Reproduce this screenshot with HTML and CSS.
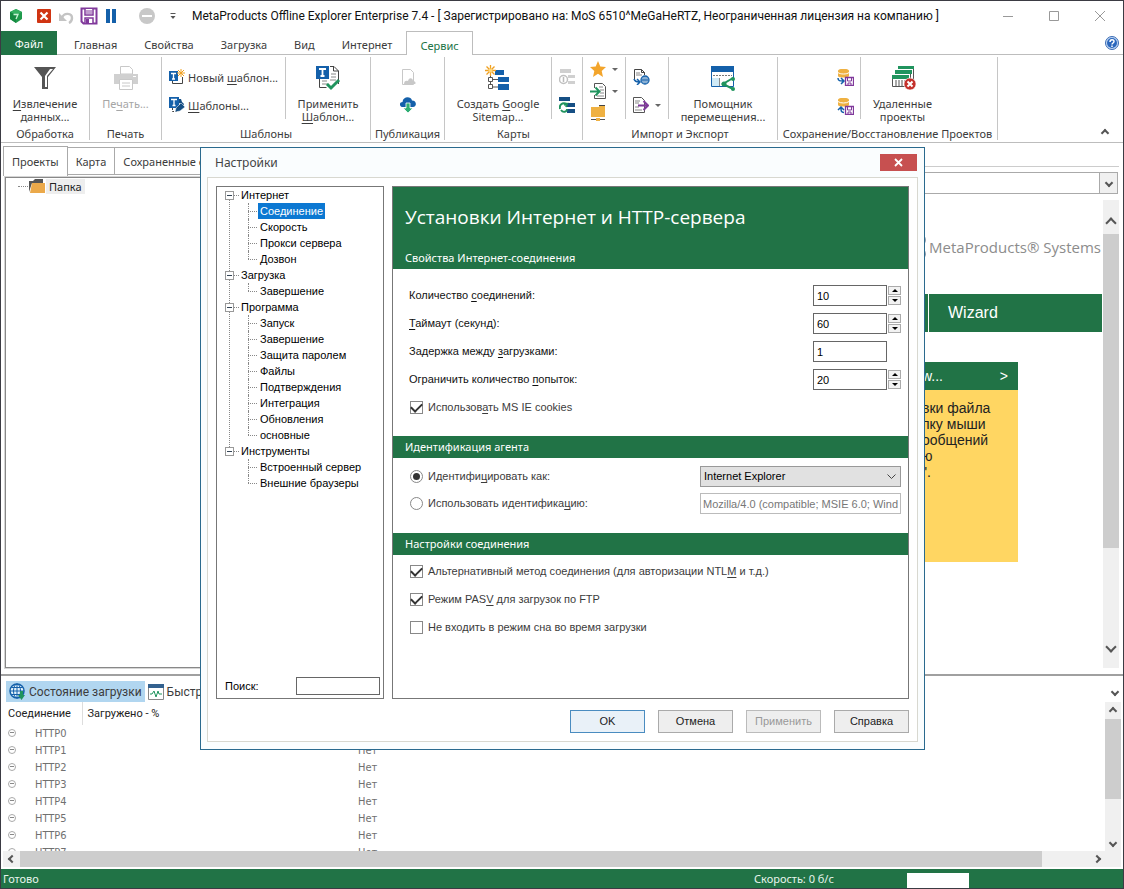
FILE: index.html
```html
<!DOCTYPE html>
<html lang="ru">
 <head>
  <meta charset="utf-8">
  <title>MetaProducts Offline Explorer Enterprise</title>
  <link rel="stylesheet" href="styles.css">
 </head>
 <body>
  <header class="titlebar">
   <svg class="ic" width="16" height="16" viewBox="0 0 16 16"><path d="M8 1l6 3v7l-6 4-6-4V4z" fill="#1f9a4c"/><path d="M8 1l6 3-6 3-6-3z" fill="#36b062"/><path d="M2 4l6 3v8l-6-4z" fill="#168a42"/><path d="M5.500 6.500h4.500l-2 4.500" fill="none" stroke="#c8f0d4" stroke-width="1.300"/></svg>
   <div class="quick">
    <button aria-label="Стоп"><svg width="16" height="16" viewBox="0 0 16 16"><rect x="1" y="1" width="14" height="14" rx="1" fill="#d03412"/><path d="M4.500 4.500l7 7m0-7l-7 7" stroke="#fff" stroke-width="2.200"/></svg></button>
    <button aria-label="Отменить"><svg width="16" height="16" viewBox="0 0 16 16"><path d="M1 5v8h8z" fill="#c4c4c4"/><path d="M4 10c2-6 10-5 10 0 0 2-1 4-3 5" fill="none" stroke="#c4c4c4" stroke-width="2.400"/></svg></button>
    <button aria-label="Сохранить"><svg width="18" height="18" viewBox="0 0 18 18"><path d="M1.500 1.500h15v15h-13l-2-2z" fill="#fff" stroke="#80399b" stroke-width="2"/><path d="M5 2v6h8V2M5 16v-5h8v5" fill="#fff" stroke="#80399b" stroke-width="1.500"/><path d="M6 4h6M6 6h6" stroke="#80399b"/><path d="M6 12h3v4H6z" fill="#80399b"/></svg></button>
    <button aria-label="Пауза"><svg width="14" height="16" viewBox="0 0 14 16"><path d="M2 1h4v14H2zM8 1h4v14H8z" fill="#1460aa"/></svg></button>
    <button class="minus" aria-label="Убрать"><svg width="18" height="18" viewBox="0 0 18 18"><circle cx="9" cy="9" r="8" fill="#c8c8c8"/><path d="M4 9h10" stroke="#fff" stroke-width="2"/></svg></button>
    <button class="more" aria-label="Настройка панели"><svg width="8" height="8" viewBox="0 0 8 8"><path d="M1.500 1.500h5" stroke="#555"/><path d="M1.500 4h5L4 7z" fill="#555"/></svg></button>
   </div>
   <h1 class="title">MetaProducts Offline Explorer Enterprise 7.4 - [ Зарегистрировано на: MoS 6510^MeGaHeRTZ, Неограниченная лицензия на компанию ]</h1>
   <div class="winbtns">
    <button aria-label="Свернуть"><svg width="12" height="12" viewBox="0 0 12 12"><path d="M1 6.500h10" stroke="#999"/></svg></button>
    <button aria-label="Развернуть"><svg width="12" height="12" viewBox="0 0 12 12"><path d="M1.500 1.500h9v9h-9z" fill="none" stroke="#999"/></svg></button>
    <button aria-label="Закрыть"><svg width="12" height="12" viewBox="0 0 12 12"><path d="M1 1l10 10M11 1L1 11" stroke="#999"/></svg></button>
   </div>
  </header>

  <nav class="menu">
   <button class="file">Файл</button>
   <button>Главная</button>
   <button>Свойства</button>
   <button>Загрузка</button>
   <button>Вид</button>
   <button>Интернет</button>
   <button class="current">Сервис</button>
   <button class="help" aria-label="Справка"><svg width="14" height="14" viewBox="0 0 14 14"><circle cx="7" cy="7" r="6.500" fill="#c3d8f3" stroke="#3b6cb4"/><circle cx="7" cy="7" r="5" fill="#2b67bd"/><path d="M5 6c0-3 4-3 4-.500C9 7 7 7 7 8.500M7 9.500v1.500" fill="none" stroke="#fff" stroke-width="1.500"/></svg></button>
  </nav>

  <section class="ribbon">
   <div class="group g-data">
    <div class="tools">
     <button class="big"><svg width="26" height="26" viewBox="0 0 26 26"><path d="M2 2h22l-8 10v12h-6V12z" fill="#555"/><path d="M18 4h3l-6 7v11h-2V11z" fill="#fff"/></svg><span><u>И</u>звлечение<br>данных...</span></button>
    </div>
    <h2>Обработка</h2>
   </div>
   <div class="group g-print">
    <div class="tools">
     <button class="big" disabled><svg width="26" height="26" viewBox="0 0 26 26"><path d="M7.500 1.500h9l3 3V9h-12z" fill="#fff" stroke="#c8c8c8"/><path d="M1 9h24v10H1z" fill="#d0d0d0"/><path d="M6.500 14.500h13v10h-13z" fill="#fff" stroke="#c8c8c8"/><path d="M9 18h8M9 21h8" stroke="#c8c8c8"/><path d="M20 11.500h3" stroke="#fff"/></svg><span>Пе<u>ч</u>ать...</span></button>
    </div>
    <h2>Печать</h2>
   </div>
   <div class="group g-tpl">
    <div class="tools">
     <div class="col wide">
      <button class="row"><svg width="16" height="16" viewBox="0 0 16 16"><path d="M3.500 10v4.500h10V8" fill="#fff" stroke="#444"/><path d="M0 2h9v10H0z" fill="#1460aa"/><path d="M2 4.500h5M4.500 4v6M3 10h3" stroke="#fff" stroke-width="1.300"/><path d="M12 0v8M8 4h8M9 1l6 6M15 1L9 7" stroke="#f0a020"/></svg><span>Новый <u>ш</u>аблон...</span></button>
      <button class="row"><svg width="16" height="16" viewBox="0 0 16 16"><path d="M3.500 11v3.500h5" fill="none" stroke="#444" stroke-dasharray="2 1"/><path d="M0 0h10v11H0z" fill="#1460aa"/><path d="M2 2.500h6M5 2.500v6M3.500 8.500h3" stroke="#fff" stroke-width="1.300"/><path d="M10 2h2l1 3 2 2-1 2-2-2-2-1z" fill="#164f84"/><path d="M6 15l1-4 5-5 4 4-5 4z" fill="#164f84" stroke="#fff" stroke-width=".5"/></svg><span><u>Ш</u>аблоны...</span></button>
     </div>
     <button class="big"><svg width="26" height="26" viewBox="0 0 26 26"><path d="M4.500 13v9.500h7M15 1.500h4l4.500 4.500v13M18.500 1.500V6h5" fill="none" stroke="#444"/><path d="M16 9h5M16 12h5M15 15h6M7 16h5M7 19h6" stroke="#888"/><path d="M1 1h13v13H1z" fill="#1460aa"/><path d="M4 4h7M7.500 4v7M5.500 11h4" stroke="#fff" stroke-width="1.800"/><path d="M12 19l4 4 8-8" fill="none" stroke="#20945e" stroke-width="3"/></svg><span>Применить<br><u>Ш</u>аблон...</span></button>
    </div>
    <h2>Шаблоны</h2>
   </div>
   <div class="group g-pub">
    <div class="tools">
     <div class="col">
      <button class="sm" disabled aria-label="Опубликовать"><svg width="16" height="16" viewBox="0 0 16 16"><path d="M2.500.500h8l3 3v12h-11z" fill="#fff" stroke="#c8c8c8"/><path d="M4 15c0-3 2-4 4-3 1-4 5-3 5 0 3 0 3 3 2 3z" fill="#c8c8c8"/></svg></button>
      <button class="sm" aria-label="Загрузить"><svg width="16" height="16" viewBox="0 0 16 16"><path d="M3 10c-4 0-4-5-.500-5C3-1 11-1 12 3.500c5 0 5 6.500 1 6.500z" fill="#1460aa"/><path d="M6 6h4v5h3l-5 5-5-5h3z" fill="#2fae74" stroke="#fff" stroke-width=".8"/></svg></button>
     </div>
    </div>
    <h2>Публикация</h2>
   </div>
   <div class="group g-map">
    <div class="tools">
     <button class="big"><svg width="26" height="26" viewBox="0 0 26 26"><path d="M5.500 10v13M5.500 14.500H14M5.500 22H14" stroke="#555" fill="none"/><path d="M3.500 12.500h4v4h-4zM3.500 19.500h4v4h-4z" fill="#fff" stroke="#555"/><path d="M10 5h9v5h-9zM13 12h11v5H13zM13 19h11v6H13z" fill="#1460aa"/><path d="M5.500 0v11M0 5.500h11M1.500 1.500l8 8M9.500 1.500l-8 8" stroke="#f0a020" stroke-width="1.300"/><circle cx="5.500" cy="5.500" r="2" fill="#ffd77a"/></svg><span>Создать <u>G</u>oogle<br>Sitemap...</span></button>
     <div class="col line">
      <button class="sm" disabled aria-label="Сведения"><svg width="16" height="16" viewBox="0 0 16 16"><path d="M1 0h11v4H1zM9 6h7v3H9zM9 12h7v3H9z" fill="#d0d0d0"/><circle cx="4.500" cy="10.500" r="4" fill="#fff" stroke="#c0c0c0" stroke-width="1.500"/><path d="M4.500 8v5" stroke="#bbb" stroke-width="1.500"/></svg></button>
      <button class="sm" aria-label="Обновить карту"><svg width="16" height="16" viewBox="0 0 16 16"><path d="M0 0h11v4H0zM8 6h8v4H8zM8 12h8v4H8z" fill="#164f84"/><path d="M8 7C3 5 0 8 1 12" fill="none" stroke="#20945e" stroke-width="2"/><path d="M2 13c2 3 6 2 6-1M5 8l3-1-1 3" fill="none" stroke="#20945e" stroke-width="1.800"/></svg></button>
     </div>
    </div>
    <h2>Карты</h2>
   </div>
   <div class="group g-imp">
    <div class="tools">
     <div class="col tight">
      <button class="sm drop" aria-label="Избранное"><svg width="16" height="16" viewBox="0 0 16 16"><path d="M8 0l2.300 5.500 5.700.500-4.300 4 1.300 6-5-3.200L3 16l1.300-6L0 6l5.700-.500z" fill="#f3a52c"/></svg></button>
      <button class="sm drop" aria-label="Импорт"><svg width="16" height="16" viewBox="0 0 16 16"><path d="M4.500 5V.500h8l3 3v12h-11V12" fill="#fff" stroke="#555"/><path d="M9 4h4M10 7h4M10 10h4M7 13h7" stroke="#888"/><path d="M0 8.500h9M5.500 4.500l4 4-4 4" fill="none" stroke="#20945e" stroke-width="2"/></svg></button>
      <button class="sm" aria-label="Сетевая папка"><svg width="16" height="16" viewBox="0 0 16 16"><path d="M1 2h8V1h6v11H1z" fill="#efb142"/><path d="M9 0h6v1H9z" fill="#444"/><path d="M1 14.500h5m4 0h5" stroke="#555"/><path d="M6 13h4v3H6z" fill="#efb142"/></svg></button>
     </div>
     <div class="col line imp2">
      <button class="sm" aria-label="Импорт из сети"><svg width="17" height="16" viewBox="0 0 17 16"><path d="M1.500 10V.500h7l3 3V6M8.500.500v3h3" fill="#fff" stroke="#444"/><path d="M3 4h4M3 6h6" stroke="#888"/><path d="M1 10c1 3 3 3 5 3M4 10l3 3-3 3" fill="none" stroke="#1460aa" stroke-width="1.500"/><circle cx="12" cy="11" r="4" fill="#fff" stroke="#1460aa" stroke-width="1.300"/><path d="M8 11h8M12 7v8M10 8v6M14 8v6" stroke="#1460aa"/></svg></button>
      <button class="sm drop" aria-label="Экспорт"><svg width="16" height="16" viewBox="0 0 16 16"><path d="M.500.500h8l3 3v12H.500z" fill="#fff" stroke="#555"/><path d="M2 4h5M2 6h4M2 10h4M2 13h7" stroke="#888"/><path d="M5 8.500h9M10.500 4l4.500 4.500-4.500 4.500" fill="none" stroke="#80399b" stroke-width="2"/></svg></button>
     </div>
     <button class="big line"><svg width="26" height="26" viewBox="0 0 26 26"><path d="M1.500 1.500h22v20h-22z" fill="#fff" stroke="#1460aa"/><path d="M1 1h23v6H1z" fill="#1460aa"/><path d="M3 10.500h19" stroke="#777" stroke-dasharray="2 1"/><path d="M2 13h7v8H2z" fill="#cfeaf6"/><path d="M9.500 13v8" stroke="#888"/><path d="M23 13l-10 6 10 5" fill="none" stroke="#20945e" stroke-width="2"/><circle cx="23" cy="14" r="2" fill="#20945e"/><circle cx="14" cy="19" r="2.500" fill="#20945e"/><circle cx="23" cy="24" r="2" fill="#20945e"/></svg><span>Помощник<br>перемещения...</span></button>
    </div>
    <h2>Импорт и Экспорт</h2>
   </div>
   <div class="group g-save">
    <div class="tools">
     <div class="col save">
      <button class="sm" aria-label="Сохранить проекты"><svg width="17" height="17" viewBox="0 0 17 17"><path d="M1 2c0-3 11-3 11 0v5c0 2-11 2-11 0z" fill="#efb142"/><path d="M1 3.500c2 2 9 2 11 0" fill="none" stroke="#fff"/><path d="M1 9c0 3 2 3 5 3M4 9l3 3-3 3" fill="none" stroke="#1460aa" stroke-width="1.500"/><path d="M8.500 8.500h8v8h-8z" fill="#fff" stroke="#80399b" stroke-width="1.300"/><path d="M10.500 9v3h4V9M11 16v-2h3v2" fill="none" stroke="#80399b"/></svg></button>
      <button class="sm" aria-label="Восстановить проекты"><svg width="17" height="17" viewBox="0 0 17 17"><path d="M1 2c0-3 11-3 11 0v5c0 2-11 2-11 0z" fill="#efb142"/><path d="M1 3.500c2 2 9 2 11 0" fill="none" stroke="#fff"/><path d="M7 14.500c-3 0-3-2-3-5M1 12l3-3 3 3" fill="none" stroke="#1460aa" stroke-width="1.500"/><path d="M8.500 8.500h8v8h-8z" fill="#fff" stroke="#80399b" stroke-width="1.300"/><path d="M10.500 9v3h4V9M11 16v-2h3v2" fill="none" stroke="#80399b"/></svg></button>
     </div>
     <button class="big line deleted"><svg width="26" height="26" viewBox="0 0 26 26"><path d="M8 1h16v3H8zM5 5h17v4H5zM2 10h17v4H2z" fill="#20945e"/><path d="M23.500 4v12M20.500 9v5M2.500 14v7.500h15V14" fill="none" stroke="#555"/><path d="M5 16h10M5 18h10M5 20h10" stroke="#555" stroke-dasharray="2 1"/><circle cx="20" cy="19" r="6" fill="#c4302b" stroke="#fff" stroke-width=".600"/><path d="M17.500 16.500l5 5m0-5l-5 5" stroke="#fff" stroke-width="2"/></svg><span>Удаленные<br>проекты</span></button>
    </div>
    <h2>Сохранение/Восстановление Проектов</h2>
   </div>
   <button class="collapse" aria-label="Свернуть ленту"><i class="chev up"></i></button>
  </section>

  <main class="work">
   <section class="projects">
    <div class="ptabs">
     <button class="current">Проекты</button>
     <button>Карта</button>
     <button class="saved">Сохраненные с</button>
    </div>
    <div class="ptree">
     <div class="node"><svg width="17" height="15" viewBox="0 0 17 15"><path d="M1 13V2h4l2-2h8v4H4z" fill="#555"/><path d="M4 4h13v10H2z" fill="#eba94a"/></svg><span>Папка</span></div>
    </div>
   </section>
   <section class="browser">
    <div class="address"><input aria-label="Адрес"><button aria-label="Список адресов"><i class="chev down"></i></button></div>
    <div class="view">
     <div class="page">
      <div class="brand"><svg width="28" height="28" viewBox="0 0 28 28"><circle cx="21" cy="7" r="6" fill="#8f9bab"/><circle cx="7" cy="7" r="6" fill="#8f9bab"/><circle cx="7" cy="21" r="6" fill="#8f9bab"/><circle cx="21" cy="21" r="6" fill="#8f9bab"/></svg><span>MetaProducts® Systems</span></div>
      <div class="pagenav"><a class="prev" href="#home">&nbsp;</a><a class="wizard" href="#wizard">Wizard</a></div>
      <article class="card">
       <h3><span>w...</span><span>&gt;</span></h3>
       <p>вки файла<br>пку мыши<br>ообщений<br>ю<br>".</p>
      </article>
     </div>
     <div class="vscroll tall"><button aria-label="Вверх"><i class="chev up"></i></button><div class="thumb"></div><button aria-label="Вниз"><i class="chev down"></i></button></div>
    </div>
   </section>
  </main>

  <section class="queue">
   <div class="qtabs">
    <button class="current"><svg width="17" height="17" viewBox="0 0 17 17"><circle cx="8" cy="8" r="7" fill="#e3f2fb" stroke="#1460aa" stroke-width="1.500"/><path d="M1 8h14M2.500 4.500h11M2.500 11.500h11M8 1v14" stroke="#1460aa"/><ellipse cx="8" cy="8" rx="3.500" ry="7" fill="none" stroke="#1460aa"/><path d="M9 12h2V8h3v4h2l-3.500 5z" fill="#20945e"/></svg>Состояние загрузки</button>
    <button><svg width="16" height="16" viewBox="0 0 16 16"><path d="M.500.500h15v15H.500z" fill="#fff" stroke="#888"/><path d="M0 0h16v4H0z" fill="#33618f"/><path d="M2 10h2l2-3 2 6 2-6 1 3h3" fill="none" stroke="#20945e"/></svg>Быстр</button>
    <button class="qmore" aria-label="Ещё"><i class="chev down"></i></button>
   </div>
   <div class="qbody">
    <div class="qlist">
     <table>
      <colgroup><col class="c-conn"><col class="c-load"><col class="c-state"></colgroup>
      <thead><tr><th>Соединение</th><th>Загружено - %</th><th></th></tr></thead>
      <tbody>
       <tr><td><i></i>HTTP0</td><td></td><td>Нет</td></tr>
       <tr><td><i></i>HTTP1</td><td></td><td>Нет</td></tr>
       <tr><td><i></i>HTTP2</td><td></td><td>Нет</td></tr>
       <tr><td><i></i>HTTP3</td><td></td><td>Нет</td></tr>
       <tr><td><i></i>HTTP4</td><td></td><td>Нет</td></tr>
       <tr><td><i></i>HTTP5</td><td></td><td>Нет</td></tr>
       <tr><td><i></i>HTTP6</td><td></td><td>Нет</td></tr>
       <tr><td><i></i>HTTP7</td><td></td><td>Нет</td></tr>
      </tbody>
     </table>
    </div>
    <div class="vscroll short"><button aria-label="Вверх"><i class="chev up"></i></button><div class="thumb"></div><button aria-label="Вниз"><i class="chev down"></i></button></div>
   </div>
   <div class="hscroll"><button aria-label="Влево"><i class="chev left"></i></button><div class="thumb"></div><button aria-label="Вправо"><i class="chev right"></i></button></div>
  </section>

  <footer class="status"><span>Готово</span><span class="speed">Скорость: 0 б/с</span><span class="meter"></span></footer>

  <form class="dialog" role="dialog" aria-labelledby="dlg-title">
   <div class="dlg-head"><h2 id="dlg-title">Настройки</h2><button type="button" aria-label="Закрыть"><svg width="9" height="9" viewBox="0 0 9 9"><path d="M1 1l7 7m0-7L1 8" stroke="#fff" stroke-width="1.800"/></svg></button></div>
   <div class="dlg-body">
    <div class="panes">
     <div class="tree">
      <ul>
       <li><button type="button" aria-label="Свернуть"></button>Интернет
        <ul><li><span class="picked">Соединение</span></li><li>Скорость</li><li>Прокси сервера</li><li>Дозвон</li></ul></li>
       <li><button type="button" aria-label="Свернуть"></button>Загрузка
        <ul><li>Завершение</li></ul></li>
       <li><button type="button" aria-label="Свернуть"></button>Программа
        <ul><li>Запуск</li><li>Завершение</li><li>Защита паролем</li><li>Файлы</li><li>Подтверждения</li><li>Интеграция</li><li>Обновления</li><li>основные</li></ul></li>
       <li><button type="button" aria-label="Свернуть"></button>Инструменты
        <ul><li>Встроенный сервер</li><li>Внешние браузеры</li></ul></li>
      </ul>
      <div class="search"><label for="find">Поиск:</label><input id="find"></div>
     </div>
     <div class="settings">
      <div class="banner"><h3>Установки Интернет и HTTP-сервера</h3><h4>Свойства Интернет-соединения</h4></div>
      <div class="fields">
       <div class="field"><label for="conn">Количество <u>с</u>оединений:</label><input id="conn" value="10"><span class="spin"><button type="button" aria-label="Больше"></button><button type="button" aria-label="Меньше"></button></span></div>
       <div class="field"><label for="tmo"><u>Т</u>аймаут (секунд):</label><input id="tmo" value="60"><span class="spin"><button type="button" aria-label="Больше"></button><button type="button" aria-label="Меньше"></button></span></div>
       <div class="field"><label for="delay">Задержка между <u>з</u>агрузками:</label><input id="delay" value="1"><span class="nospin"></span></div>
       <div class="field"><label for="tries">Ограничить количество <u>п</u>опыток:</label><input id="tries" value="20"><span class="spin"><button type="button" aria-label="Больше"></button><button type="button" aria-label="Меньше"></button></span></div>
       <label class="tick"><input type="checkbox" checked><span>Использов<u>а</u>ть MS IE cookies</span></label>
      </div>
      <h4 class="bar">Идентификация агента</h4>
      <div class="agent">
       <label class="tick"><input type="radio" name="agent" checked><span>Идентифи<u>ц</u>ировать как:</span></label>
       <select aria-label="Идентифицировать как"><option>Internet Explorer</option></select>
       <label class="tick"><input type="radio" name="agent"><span>Использовать идентифика<u>ц</u>ию:</span></label>
       <input class="ua" aria-label="Идентификация" disabled value="Mozilla/4.0 (compatible; MSIE 6.0; Windows NT 5.1)">
      </div>
      <h4 class="bar">Настройки соединения</h4>
      <div class="opts">
       <label class="tick"><input type="checkbox" checked><span>Альтернативный метод соединения (для авторизации NTL<u>M</u> и т.д.)</span></label>
       <label class="tick"><input type="checkbox" checked><span>Режим PAS<u>V</u> для загрузок по FTP</span></label>
       <label class="tick"><input type="checkbox"><span>Не входить в режим сна во время загрузки</span></label>
      </div>
     </div>
    </div>
    <div class="dlg-buttons">
     <button type="button" class="default">OK</button>
     <button type="button">Отмена</button>
     <button type="button" disabled>Применить</button>
     <button type="button">Справка</button>
    </div>
   </div>
  </form>
 </body>
</html>
```
FILE: styles.css
```css
* { box-sizing: border-box; }
body
{
 margin: 0;
 height: 100vh;
 display: flex;
 flex-direction: column;
 position: relative;
 overflow: hidden;
 border: 1px solid #3b3b43;
 background: #fff;
 color: #3c3c3c;
 font: 11px/13px "Noto Sans", "Open Sans", sans-serif;
}
h1, h2, h3, h4, p, ul { margin: 0; padding: 0; font-weight: normal; }
ul { list-style: none; }
button
{
 display: flex;
 align-items: center;
 justify-content: center;
 margin: 0;
 padding: 0;
 border: 0;
 background: none;
 color: inherit;
 font: inherit;
}
svg { display: block; flex: none; }
input, select { font: inherit; margin: 0; border-radius: 0; }
u { text-underline-offset: 2px; }

/* title bar */
.titlebar { display: flex; align-items: center; height: 30px; padding: 0 17px 0 7px; flex: none; }
.quick { display: flex; align-items: center; gap: 6px; margin-left: 12px; }
.quick .minus { margin-left: 14px; }
.quick .more { margin-left: 7px; }
.title { margin-left: 15px; color: #111; font: 12px/16px Roboto, sans-serif; white-space: nowrap; }
.winbtns { display: flex; gap: 34px; margin-left: auto; }

/* menu */
.menu
{
 display: flex;
 flex: none;
 gap: 1px;
 height: 24px;
 border-bottom: 1px solid #bdbdbd;
 padding-right: 4px;
}
.menu button { padding: 3px 13px 0; height: 24px; }
.menu .file { background: #217346; color: #fff; width: 56px; padding: 0; margin-right: 3px; }
.menu .current { border: 1px solid #bdbdbd; border-bottom: 0; background: #fff; color: #217346; }
.menu .help { margin-left: auto; padding: 0; }

/* ribbon */
.ribbon { display: flex; flex: none; height: 88px; border-bottom: 1px solid #bdbdbd; padding-top: 2px; }
.group { display: flex; flex-direction: column; height: 83px; border-right: 1px solid #c6c6c6; }
.group h2 { font-size: 11px; line-height: 12px; text-align: center; white-space: nowrap; }
.tools { display: flex; flex: 1; }
.g-data { width: 89px; }
.g-print { width: 72px; }
.g-tpl { width: 209px; }
.g-pub { width: 74px; }
.g-map { width: 138px; }
.g-imp { width: 195px; }
.g-save { width: 220px; }
.big { flex: 1; flex-direction: column; justify-content: flex-start; gap: 6px; padding-top: 8px; white-space: nowrap; }
.big:disabled { color: #a6a6a6; }
.col { display: flex; flex: 1; flex-direction: column; align-items: center; gap: 12px; padding-top: 12px; }
.wide { flex: none; width: 123px; padding-left: 7px; align-items: flex-start; }
.wide + .big, .line { border-left: 1px solid #c6c6c6; height: 62px; }
.row { gap: 3px; white-space: nowrap; height: 16px; }
.g-map .line { flex: none; width: 31px; }
.tight { flex: none; width: 42px; gap: 6px; padding: 4px 0 0 7px; align-items: flex-start; }
.imp2 { flex: none; width: 43px; padding-left: 7px; align-items: flex-start; }
.save { flex: none; width: 82px; padding-right: 6px; align-items: flex-end; }
.deleted { flex: none; width: 84px; }
.drop { gap: 6px; }
.drop::after { content: ""; border: 3px solid transparent; border-top-color: #666; border-bottom: 0; }
.collapse { margin: auto 12px 3px auto; width: 12px; height: 12px; }

.chev { display: block; width: 6px; height: 6px; border: solid #555; border-width: 2px 2px 0 0; }
.chev.up { transform: rotate(-45deg); }
.chev.down { transform: rotate(135deg); }
.chev.left { transform: rotate(-135deg); }
.chev.right { transform: rotate(45deg); }

/* work area */
.work { display: flex; flex: 1; min-height: 0; padding: 3px 4px 4px 2px; }
.projects { display: flex; flex-direction: column; flex: none; width: 320px; }
.ptabs { display: flex; align-items: flex-start; height: 30px; white-space: nowrap; overflow: hidden; }
.ptabs button { height: 28px; margin-top: 1px; padding: 0 8px; border: 1px solid #aaa; border-left: 0; }
.ptabs .current { height: 30px; margin-top: 0; border-left: 1px solid #aaa; border-bottom: 0; }
.ptabs .saved { justify-content: flex-start; width: 150px; }
.ptree { flex: 1; margin: 1px 0 2px 2px; border: 1px solid #888; outline: 1px solid #d5d5d5; padding: 1px 0 0 12px; }
.node { display: flex; align-items: center; color: #222; }
.node::before { content: ""; width: 10px; border-top: 1px dotted #888; }
.node span { padding: 1px 3px; margin-left: 1px; background: #eee; }
.browser { display: flex; flex-direction: column; flex: 1; margin-top: 20px; border-top: 1px solid #ccc; }
.address { display: flex; height: 22px; margin: 5px 1px 6px 0; border: 1px solid #aaa; }
.address input { flex: 1; min-width: 0; border: 0; }
.address button { width: 18px; border-left: 1px solid #aaa; background: #f0f0f0; }
.view { display: flex; flex: 1; margin-bottom: 2px; }
.page { flex: 1; padding: 33px 1px 0 0; font-family: "Liberation Sans", Arial, sans-serif; }
.brand { display: flex; align-items: center; justify-content: flex-end; gap: 2px; padding-right: 1px; color: #8c8c8c; font: 15px/28px "Open Sans", sans-serif; }
.pagenav { display: flex; justify-content: flex-end; gap: 1px; margin-top: 33px; }
.pagenav a { height: 38px; background: #217346; color: #fff; font-size: 16px; line-height: 38px; text-decoration: none; }
.pagenav .prev { width: 120px; }
.pagenav .wizard { width: 173px; padding-left: 19px; }
.card { width: 100px; height: 200px; margin: 30px 84px 0 auto; background: #ffd662; color: #222; font-size: 14px; line-height: 16px; }
.card h3 { display: flex; justify-content: space-between; height: 28px; padding: 0 10px 0 4px; background: #217346; color: #fff; font-size: 14px; line-height: 28px; }
.card p { padding: 10px 0 0 4px; white-space: nowrap; }

/* scroll bars */
.vscroll { display: flex; flex-direction: column; flex: none; width: 16px; background: #f0f0f0; }
.vscroll .thumb { background: #cdcdcd; margin-bottom: auto; }
.tall button { height: 34px; padding-top: 12px; }
.tall button:last-child { padding: 0 0 8px; }
.tall .thumb { height: 67%; }
.tall .chev { width: 8px; height: 8px; }
.short button { height: 17px; }
.short .thumb { height: 54%; }
.hscroll { display: flex; flex: none; height: 16px; background: #f0f0f0; }
.hscroll button { width: 17px; }
.hscroll button:last-child { margin: 0 16px 0 auto; }
.hscroll .thumb { width: calc(100% - 96px); background: #cdcdcd; }

/* download state */
.queue { display: flex; flex-direction: column; flex: none; height: 195px; padding: 5px 2px 2px; border-top: 2px solid #a0a0a0; }
.qtabs { display: flex; flex: none; height: 21px; padding-left: 3px; font: 12px/14px Roboto, sans-serif; }
.qtabs button { gap: 3px; padding: 0 3px; white-space: nowrap; }
.qtabs .current { background: #b1d6f0; }
.qtabs .qmore { margin-left: auto; }
.qbody { display: flex; flex: 1; min-height: 0; }
.qlist { flex: 1; overflow: hidden; }
table { width: 100%; table-layout: fixed; border-collapse: collapse; font-family: "DejaVu Sans Condensed", "Open Sans", sans-serif; }
.c-conn { width: 79px; }
.c-load { width: 271px; }
th, td { padding: 0 0 0 5px; height: 17px; line-height: 17px; text-align: left; color: #707070; }
th { height: 23px; color: #222; font: 11px/17px Roboto, sans-serif; }
th:first-child { border-right: 1px solid #ddd; }
td:first-child { white-space: nowrap; }
td i { display: inline-block; position: relative; width: 8px; height: 8px; margin-right: 19px; border: 1px solid #aaa; border-radius: 50%; }
td i::after { content: ""; position: absolute; left: 1px; top: 2px; width: 4px; height: 1px; background: #888; }

.status { display: flex; flex: none; align-items: center; height: 19px; padding: 0 2px; background: #217346; color: #e8f3ec; }
.speed { width: 153px; margin-left: auto; }
.meter { width: 62px; height: 15px; margin: 4px 152px 0 0; background: #fff; }

/* settings window */
.dialog
{
 position: absolute;
 left: 199px;
 top: 146px;
 width: 725px;
 padding: 0 6px 7px;
 border: 1px solid #2a6a8e;
 background: #fafdfe;
 color: #111;
 font-family: "Liberation Sans", Arial, sans-serif;
}
.dlg-head { display: flex; align-items: center; justify-content: space-between; height: 29px; padding: 0 1px 0 8px; color: #444; }
.dlg-head h2 { font: 12px/16px "Noto Sans", sans-serif; }
.dlg-head button { width: 37px; height: 17px; background: #c75050; }
.dlg-body { padding: 8px; border: 1px solid #d8d8d0; background: #fff; }
.panes { display: flex; gap: 8px; min-height: 513px; }
.tree { display: flex; flex-direction: column; justify-content: space-between; flex: none; width: 168px; border: 1px solid #777; padding: 0 3px 3px 8px; line-height: 16px; color: #000; }
.tree > ul > li { position: relative; padding-left: 16px; }
.tree > ul > li:not(:last-child)::before { content: ""; position: absolute; left: 4px; top: 8px; bottom: -8px; border-left: 1px dotted #888; }
.tree > ul > li::after { content: ""; position: absolute; left: 9px; top: 8px; width: 5px; border-top: 1px dotted #888; }
.tree li button { position: absolute; z-index: 1; left: 0; top: 4px; width: 9px; height: 9px; border: 1px solid #999; background: #fff; }
.tree li button::after { content: ""; width: 5px; height: 1px; background: #345; }
.tree li li { position: relative; margin-left: 7px; padding-left: 12px; }
.tree li li::before { content: ""; position: absolute; left: 0; top: 0; height: 16px; border-left: 1px dotted #888; }
.tree li li:last-child::before { height: 8px; }
.tree li li::after { content: ""; position: absolute; left: 0; top: 8px; width: 9px; border-top: 1px dotted #888; }
.picked { display: inline-block; margin-left: -2px; padding: 0 2px; background: #0c78d2; color: #fff; }
.search { display: flex; align-items: center; justify-content: space-between; }
.search input { width: 84px; height: 18px; border: 1px solid #666; }

.settings { flex: 1; border: 1px solid #777; }
.banner { display: flex; flex-direction: column; justify-content: space-between; height: 82px; padding: 17px 12px 4px; background: #217346; color: #fff; }
.banner h3 { font: 19px/27px "Open Sans", sans-serif; }
.banner h4, .bar { font: 11px/15px "Noto Sans", sans-serif; }
.bar { height: 22px; padding: 3px 12px; background: #217346; color: #fff; }
.fields { display: flex; flex-direction: column; gap: 7px; height: 167px; padding: 16px 7px 0 16px; }
.field { display: flex; align-items: center; height: 21px; }
.field label { flex: 1; }
.field input { width: 74px; height: 21px; padding: 0 3px; border: 1px solid #666; }
.spin, .nospin { width: 13px; margin-left: 1px; }
.spin { display: flex; flex-direction: column; gap: 1px; }
.spin button { height: 9px; border: 1px solid #aaa; background: #f2f2f2; }
.spin button::after { content: ""; border: 3px solid transparent; border-bottom-color: #000; border-top: 0; }
.spin button:last-child::after { border-bottom: 0; border-top: 3px solid #000; }
.tick { display: flex; align-items: center; gap: 5px; height: 21px; color: #3c3c3c; }
.tick input { appearance: none; display: flex; align-items: center; justify-content: center; width: 13px; height: 13px; margin-left: 1px; border: 1px solid #888; background: #fff; }
.tick [type=checkbox]:checked::after { content: ""; width: 9px; height: 5px; border: solid #333; border-width: 0 0 2px 2px; transform: translateY(-1px) rotate(-45deg); }
.tick [type=radio] { border-radius: 50%; }
.tick [type=radio]:checked::after { content: ""; width: 7px; height: 7px; border-radius: 50%; background: #333; }
.agent { display: grid; grid-template-columns: 1fr 201px; gap: 6px 0; height: 75px; padding: 8px 7px 0 16px; align-content: start; }
.agent select
{
 appearance: none;
 height: 21px;
 padding: 0 3px;
 border: 1px solid #999;
 color: #000;
 background: #e1e1e1 url("data:image/svg+xml,%3Csvg xmlns='http://www.w3.org/2000/svg' width='9' height='6'%3E%3Cpath d='M.5.5l4 4 4-4' fill='none' stroke='%23444'/%3E%3C/svg%3E") no-repeat right 4px center;
}
.ua { width: 201px; height: 21px; padding: 0 2px; border: 1px solid #bbb; background: #fff; color: #777; }
.opts { display: flex; flex-direction: column; gap: 7px; padding: 6px 16px; }
.dlg-buttons { display: flex; justify-content: flex-end; gap: 13px; padding-top: 11px; }
.dlg-buttons button { width: 75px; height: 23px; border: 1px solid #aaa; background: #eee; color: #222; }
.dlg-buttons .default { border-color: #4a8cc0; background: #e9f1f8; }
.dlg-buttons button:disabled { color: #999; border-color: #bbb; }
```
